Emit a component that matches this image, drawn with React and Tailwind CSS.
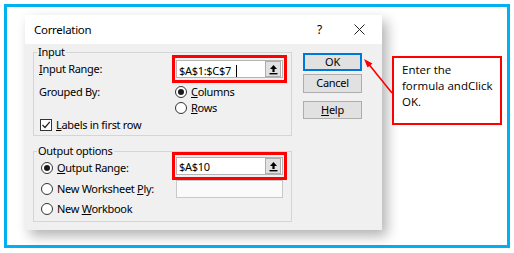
import React from "react";

const F = { fontFamily: '"Noto Sans", "Open Sans", sans-serif' };

function Radio({ checked }) {
  return (
    <span className="flex h-[12px] w-[12px] shrink-0 items-center justify-center rounded-full border border-[#333333] bg-white">
      {checked && <span className="h-[6px] w-[6px] rounded-full bg-[#1a1a1a]" />}
    </span>
  );
}

function UpBtn() {
  return (
    <span className="flex h-[16px] w-[16px] shrink-0 items-center justify-center border border-[#adadad] bg-[#e1e1e1]">
      <svg width="9" height="11" viewBox="0 0 9 11">
        <path d="M4.5 1 L8 5 L5.6 5 L5.6 8 L3.4 8 L3.4 5 L1 5 Z" fill="#000" />
        <rect x="0.5" y="9" width="8" height="1.4" fill="#000" />
      </svg>
    </span>
  );
}

function Field({ text, cursor }) {
  return (
    <div className="flex h-[18px] w-full items-center border border-[#b4b4b4] bg-white pl-[2px] pr-[1px]">
      <span className="flex-1 text-[11px] leading-none tracking-[-0.3px] text-black">
        {text}
        {cursor && <span className="ml-[5px] inline-block h-[12px] w-[1px] translate-y-[2px] bg-black" />}
      </span>
      <UpBtn />
    </div>
  );
}

export default function App() {
  return (
    <div className="h-[253px] w-[514px] bg-white p-[4px]" style={F}>
      <div className="relative flex h-[244px] w-[506px] items-start border-[3px] border-[#00b0f0] bg-white">
        {/* Dialog */}
        <div className="ml-[18px] mt-[8px] flex h-[215px] w-[357px] flex-col bg-[#f0f0f0] shadow-[5px_6px_12px_rgba(0,0,0,0.3)]">
          <div className="flex h-[29px] items-center bg-white pl-[9px] pr-[17px] text-[11.5px] tracking-[-0.3px] text-black">
            <span className="flex-1">Correlation</span>
            <span className="mr-[32px] text-[12px]">?</span>
            <svg width="11" height="11" viewBox="0 0 11 11">
              <path d="M0.5 0.5 L10.5 10.5 M10.5 0.5 L0.5 10.5" stroke="#222" strokeWidth="1" />
            </svg>
          </div>
          <div className="flex flex-1 pl-[8px] text-[11px] tracking-[-0.3px] text-black">
            <div className="flex w-[259px] flex-col">
              {/* Input group */}
              <div className="relative mt-[8px] h-[84px] border border-[#d5d5d5] pl-[5px] pr-[4px] pt-[2px]">
                <span className="absolute left-[3px] top-[-8px] bg-[#f0f0f0] px-[1px] leading-[14px]">Input</span>
                <div className="flex h-[28px] items-center">
                  <span className="w-[133px]">
                    <u>I</u>nput Range:
                  </span>
                  <div className="flex h-[28px] w-[115px] items-center border-[3px] border-[#ff0000] px-[1px]">
                    <Field text="$A$1:$C$7" cursor />
                  </div>
                </div>
                <div className="mt-[1px] flex h-[16px] items-center">
                  <span className="w-[133px]">Grouped By:</span>
                  <span className="ml-[3px] flex items-center gap-[4px]">
                    <Radio checked />
                    <span>
                      <u>C</u>olumns
                    </span>
                  </span>
                </div>
                <div className="flex h-[16px] items-center">
                  <span className="w-[133px]" />
                  <span className="ml-[3px] flex items-center gap-[4px]">
                    <Radio />
                    <span>
                      <u>R</u>ows
                    </span>
                  </span>
                </div>
                <div className="mt-[1px] flex h-[16px] items-center gap-[4px] pl-[1px]">
                  <span className="flex h-[12px] w-[12px] items-center justify-center border border-[#333333] bg-white">
                    <svg width="10" height="10" viewBox="0 0 10 10">
                      <path d="M1.5 5 L4 7.5 L8.8 1.8" fill="none" stroke="#222" strokeWidth="1.2" />
                    </svg>
                  </span>
                  <span>
                    <u>L</u>abels in first row
                  </span>
                </div>
              </div>
              {/* Output group */}
              <div className="relative mt-[15px] h-[71px] border border-[#d5d5d5] pl-[7px] pr-[4px]">
                <span className="absolute left-[3px] top-[-8px] bg-[#f0f0f0] px-[1px] leading-[14px]">Output options</span>
                <div className="flex h-[28px] items-center">
                  <span className="flex w-[131px] items-center gap-[4px] pt-[4px]">
                    <Radio checked />
                    <span>
                      <u>O</u>utput Range:
                    </span>
                  </span>
                  <div className="flex h-[28px] w-[115px] items-center border-[3px] border-[#ff0000] px-[1px]">
                    <Field text="$A$10" />
                  </div>
                </div>
                <div className="flex h-[18px] items-center">
                  <span className="flex w-[135px] items-center gap-[4px]">
                    <Radio />
                    <span>
                      New Worksheet <u>P</u>ly:
                    </span>
                  </span>
                  <div className="h-[18px] w-[107px] border border-[#c8c8c8] bg-[#fafafa]" />
                </div>
                <div className="flex h-[22px] items-center gap-[4px]">
                  <Radio />
                  <span>
                    New <u>W</u>orkbook
                  </span>
                </div>
              </div>
            </div>
            {/* Buttons */}
            <div className="ml-[11px] mt-[9px] flex w-[59px] flex-col">
              <div className="flex h-[18px] items-center justify-center border-2 border-[#0078d7] bg-[#e1e1e1]">OK</div>
              <div className="mt-[3px] flex h-[19px] items-center justify-center border border-[#adadad] bg-[#e1e1e1]">Cancel</div>
              <div className="mt-[8px] flex h-[18px] items-center justify-center border border-[#adadad] bg-[#e1e1e1]">
                <span>
                  <u>H</u>elp
                </span>
              </div>
            </div>
          </div>
        </div>
        {/* Callout */}
        <div className="ml-[10px] mt-[49px] h-[69px] w-[110px] border-2 border-[#ff0000] bg-white pl-[8px] pt-[4px] text-[11.5px] leading-[16px] text-black" style={{ fontFamily: '"Open Sans", "Noto Sans", sans-serif' }}>
          Enter the
          <br />
          formula andClick
          <br />
          OK.
        </div>
        {/* Arrow */}
        <svg className="pointer-events-none absolute left-0 top-0" width="506" height="244" viewBox="0 0 506 244">
          <line x1="385" y1="86" x2="360" y2="55" stroke="#ff0000" strokeWidth="1.6" />
          <path d="M357 52 L365.5 56.5 L360.5 60.5 Z" fill="#ff0000" />
        </svg>
      </div>
    </div>
  );
}
